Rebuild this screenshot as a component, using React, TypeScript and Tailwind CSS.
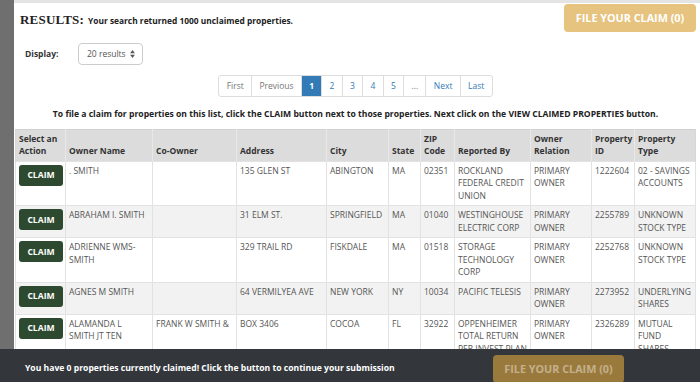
import React from "react";

type Row = {
  owner: string;
  coOwner: string;
  address: string;
  city: string;
  state: string;
  zip: string;
  reportedBy: string;
  relation: string;
  id: string;
  type: string;
};

const rows: Row[] = [
  { owner: ". SMITH", coOwner: "", address: "135 GLEN ST", city: "ABINGTON", state: "MA", zip: "02351", reportedBy: "ROCKLAND FEDERAL CREDIT UNION", relation: "PRIMARY OWNER", id: "1222604", type: "02 - SAVINGS ACCOUNTS" },
  { owner: "ABRAHAM I. SMITH", coOwner: "", address: "31 ELM ST.", city: "SPRINGFIELD", state: "MA", zip: "01040", reportedBy: "WESTINGHOUSE ELECTRIC CORP", relation: "PRIMARY OWNER", id: "2255789", type: "UNKNOWN STOCK TYPE" },
  { owner: "ADRIENNE WMS-SMITH", coOwner: "", address: "329 TRAIL RD", city: "FISKDALE", state: "MA", zip: "01518", reportedBy: "STORAGE TECHNOLOGY CORP", relation: "PRIMARY OWNER", id: "2252768", type: "UNKNOWN STOCK TYPE" },
  { owner: "AGNES M SMITH", coOwner: "", address: "64 VERMILYEA AVE", city: "NEW YORK", state: "NY", zip: "10034", reportedBy: "PACIFIC TELESIS", relation: "PRIMARY OWNER", id: "2273952", type: "UNDERLYING SHARES" },
  { owner: "ALAMANDA L SMITH JT TEN", coOwner: "FRANK W SMITH &", address: "BOX 3406", city: "COCOA", state: "FL", zip: "32922", reportedBy: "OPPENHEIMER TOTAL RETURN PER.INVEST.PLAN", relation: "PRIMARY OWNER", id: "2326289", type: "MUTUAL FUND SHARES" },
];

const cols = [
  { label: "Select an Action", w: "w-[50px]" },
  { label: "Owner Name", w: "w-[87px]" },
  { label: "Co-Owner", w: "w-[84px]" },
  { label: "Address", w: "w-[90px]" },
  { label: "City", w: "w-[62px]" },
  { label: "State", w: "w-[32px]" },
  { label: "ZIP Code", w: "w-[34px]" },
  { label: "Reported By", w: "w-[76px]" },
  { label: "Owner Relation", w: "w-[61px]" },
  { label: "Property ID", w: "w-[43px]" },
  { label: "Property Type", w: "w-[61px]" },
];

const pages = [
  { label: "First", muted: true },
  { label: "Previous", muted: true },
  { label: "1", active: true },
  { label: "2" },
  { label: "3" },
  { label: "4" },
  { label: "5" },
  { label: "...", muted: true },
  { label: "Next" },
  { label: "Last" },
];

function SortArrows() {
  return (
    <svg className="w-[5px] h-[8px]" viewBox="0 0 6 10" fill="#555">
      <path d="M3 0L6 4H0z" />
      <path d="M3 10L0 6h6z" />
    </svg>
  );
}

export default function App() {
  return (
    <div className="w-[700px] h-[382px] relative overflow-hidden flex bg-white font-['Open_Sans',sans-serif]">
      {/* dimmed page behind the modal */}
      <div className="w-[14px] shrink-0 bg-[#6f6f6f]" />

      <div className="flex-1 flex flex-col border-t-[3px] border-[#e4e4e4] pl-px pr-[5px]">
        <div className="flex items-start justify-between pl-[5px] pt-px">
          <h1 className="mt-[6px] flex items-baseline gap-[4px]">
            <span className="font-['Liberation_Serif',serif] font-bold text-[13px] text-[#222] tracking-[0.2px]">RESULTS:</span>
            <span className="text-[8.4px] font-bold text-[#222]">Your search returned 1000 unclaimed properties.</span>
          </h1>
          <button className="h-[28px] w-[132px] rounded-[4px] bg-[#e6c37e] text-white font-bold text-[10.8px]">
            FILE YOUR CLAIM (0)
          </button>
        </div>

        <div className="flex items-center mt-[11px] pl-[10px]">
          <span className="text-[8.5px] font-bold text-[#333] w-[53px]">Display:</span>
          <div className="h-[22px] w-[65px] border border-[#ccc] rounded-[4px] flex items-center gap-[4px] pl-[8px] text-[8.5px] text-[#555]">
            20 results
            <SortArrows />
          </div>
        </div>

        <div className="flex justify-center mt-[10px]">
          <div className="flex h-[22px] border border-[#ddd] rounded-[3px] overflow-hidden text-[8.5px]">
            {pages.map((p, i) => (
              <span
                key={p.label}
                className={`flex items-center px-[7.3px] ${i > 0 ? "border-l border-[#ddd]" : ""} ${
                  p.active ? "bg-[#337ab7] text-white font-bold border-[#337ab7]" : p.muted ? "text-[#777]" : "text-[#337ab7]"
                }`}
              >
                {p.label}
              </span>
            ))}
          </div>
        </div>

        <p className="text-center text-[8.6px] font-bold text-[#222] mt-[11px] mb-[8px]">
          To file a claim for properties on this list, click the CLAIM button next to those properties. Next click on the VIEW CLAIMED PROPERTIES button.
        </p>

        <table className="table-fixed border-collapse w-[680px] text-[8.5px] leading-[12.5px]">
          <thead>
            <tr className="bg-[#dcdcdc] border-t border-[#d0d0d0]">
              {cols.map((c, i) => (
                <th
                  key={c.label}
                  className={`${c.w} ${i === 0 ? "align-top" : "align-bottom"} text-left font-bold text-[#333] px-[3px] py-[3px] border-l border-[#e8e8e8] first:border-l-[#d6d6d6] last:border-r last:border-r-[#d6d6d6]`}
                >
                  {c.label}
                </th>
              ))}
            </tr>
          </thead>
          <tbody className="text-[#555]">
            {rows.map((r, i) => (
              <tr key={r.id} className={`border-t border-[#e2e2e2] ${i % 2 === 1 ? "bg-[#f2f2f2]" : "bg-white"}`}>
                <td className="align-top px-[3px] py-[3px] border-l border-[#e2e2e2]">
                  <button className="w-[44px] h-[21px] rounded-[3px] bg-[#2d4a30] text-white font-bold text-[8.6px]">CLAIM</button>
                </td>
                {[r.owner, r.coOwner, r.address, r.city, r.state, r.zip, r.reportedBy, r.relation, r.id, r.type].map((v, j) => (
                  <td key={j} className="align-top px-[3px] py-[3px] border-l border-[#e2e2e2] last:border-r">
                    {v}
                  </td>
                ))}
              </tr>
            ))}
          </tbody>
        </table>
      </div>

      {/* sticky footer over the table */}
      <div className="absolute left-0 right-0 bottom-0 h-[33px] bg-[#33373c] flex items-start">
        <span className="mt-[13px] ml-[25px] text-[8.6px] font-bold text-white w-[468px]">
          You have 0 properties currently claimed! Click the button to continue your submission
        </span>
        <button className="mt-[6px] h-[28px] w-[131px] rounded-[4px] bg-[#9a7a3c] text-[#c4b08c] font-bold text-[10.8px]">
          FILE YOUR CLAIM (0)
        </button>
      </div>
    </div>
  );
}
